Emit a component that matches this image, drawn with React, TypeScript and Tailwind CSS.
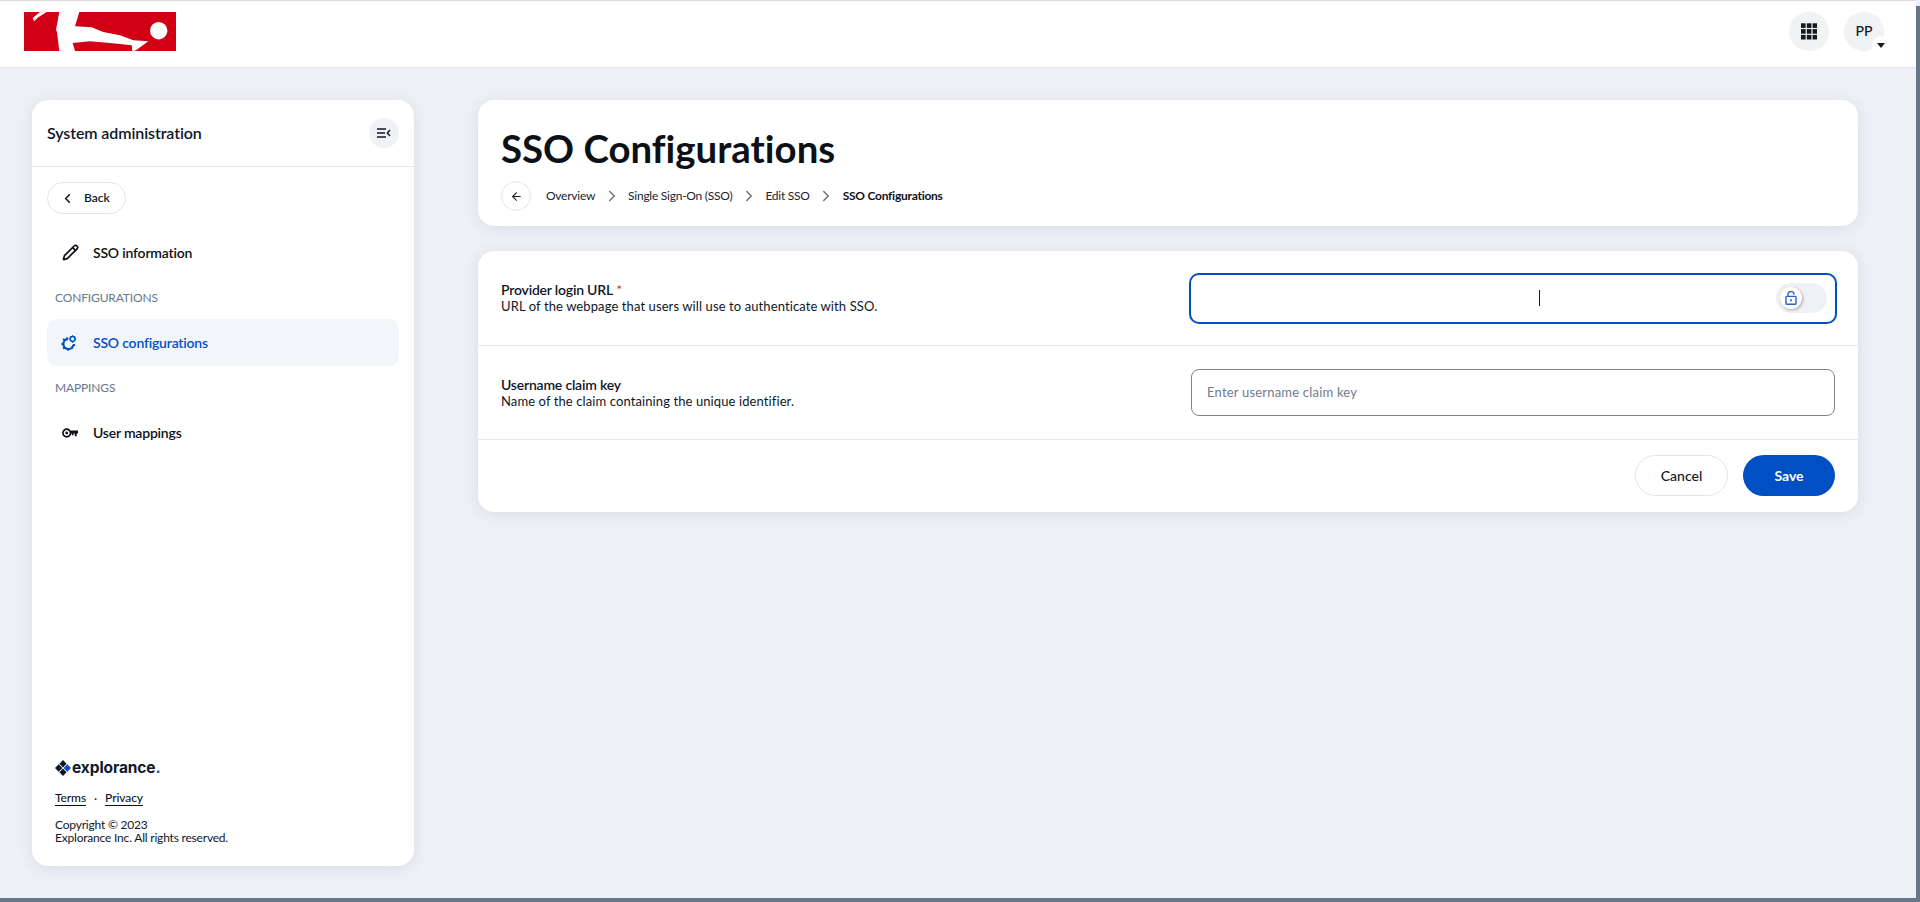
import React from "react";
import { ArrowLeft, ChevronLeft, ChevronRight, Pencil } from "lucide-react";

const font = "font-['Lato','Liberation_Sans',sans-serif] [font-variant-ligatures:none]";

function Logo() {
  return (
    <svg width="152" height="39" viewBox="0 0 152 39" className="block">
      <rect width="152" height="39" fill="#d10014" />
      <polygon
        fill="#fff"
        points="35.3,0 55.3,0 51,14.3 67.7,15.3 79.3,20 96,23.3 109.3,28.3 124.3,29.3 112.7,37.7 110,39 108.3,39 107.7,33.3 86,31 66,29.3 48.7,31 51,39 35.3,39 33,20 32,18"
      />
      <polygon fill="#fff" points="8.7,6 10,9.3 14.3,5.3 22.7,0 16,0" />
      <circle cx="134.7" cy="18.7" r="8.7" fill="#fff" />
    </svg>
  );
}

function Diamonds() {
  return (
    <svg width="16" height="16" viewBox="0 0 16 16" className="block">
      <polygon points="8,0 11.6,3.7 8,7.4 4.4,3.7" fill="#0f1729" />
      <polygon points="3.7,4.3 7.4,8 3.7,11.7 0,8" fill="#0f1729" />
      <polygon points="8,8.6 11.6,12.3 8,16 4.4,12.3" fill="#0f1729" />
      <polygon points="12.3,4.3 16,8 12.3,11.7 8.6,8" fill="#0050c4" />
    </svg>
  );
}

function GearIcon() {
  return (
    <svg width="16" height="16" viewBox="0 0 16 16" fill="none" className="block -ml-[2px]">
      <path d="M7 4.1 A5 5 0 1 0 12.3 9.8" stroke="#0050c4" strokeWidth="2.2" />
      <path
        d="M6.2 2.3v2M2.2 3.8l1.5 1.5M.4 9h2M2.2 13.8l1.5-1.5M7 15.6v-2M11.6 13.8l-1.5-1.5M14 10h-2"
        stroke="#0050c4"
        strokeWidth="2"
      />
      <circle cx="11.6" cy="4" r="2.4" stroke="#0050c4" strokeWidth="1.5" />
      <path d="M11.6.3v1M11.6 6.7v1M7.9 4h1M14.3 4h1M9 1.4l.7.7M14.2 1.4l-.7.7" stroke="#0050c4" strokeWidth="1.2" />
    </svg>
  );
}

function KeyIcon() {
  return (
    <svg width="16" height="10" viewBox="0 0 16 10" fill="none" className="block">
      <circle cx="4.7" cy="5" r="3.8" stroke="#0d1117" strokeWidth="1.7" />
      <circle cx="4.7" cy="5" r="1.4" fill="#0d1117" />
      <path d="M8.5 2.6H16v3h-1.3v2.6h-1.9V5.6h-1.2v1.6H9.8V5.6H8.5z" fill="#0d1117" />
    </svg>
  );
}

function CollapseIcon() {
  return (
    <svg width="14" height="10" viewBox="0 0 14 10" fill="none" className="block">
      <path d="M0 1h9M0 5h8M0 9h9" stroke="#0f1729" strokeWidth="1.4" />
      <path d="M13 2 10.3 5 13 8" stroke="#0f1729" strokeWidth="1.4" />
    </svg>
  );
}

function AppsIcon() {
  const cells = [0, 5.8, 11.6];
  return (
    <svg width="16" height="17" viewBox="0 0 16 17" className="block">
      {cells.map((y) =>
        cells.map((x) => <rect key={`${x}-${y}`} x={x} y={y + 0.3} width="4.6" height="4.6" fill="#14181f" />)
      )}
    </svg>
  );
}

function LockOpenIcon() {
  return (
    <svg width="12" height="14" viewBox="0 0 12 14" fill="none" className="block">
      <rect x="1" y="5.4" width="10" height="7.8" rx="0.8" stroke="#2a63c7" strokeWidth="1.4" />
      <path d="M3 5.3V3.2a3 2.6 0 0 1 6 0v.5" stroke="#2a63c7" strokeWidth="1.4" />
      <circle cx="6" cy="9.3" r="1.1" fill="#2a63c7" />
    </svg>
  );
}

function Crumb({ children, bold }: { children: React.ReactNode; bold?: boolean }) {
  return <span className={bold ? "font-bold text-[#0d1117]" : "text-[#1b2230]"}>{children}</span>;
}

function Sep() {
  return <ChevronRight size={18} strokeWidth={2} className="text-[#6b7280] mx-[7.5px] shrink-0" />;
}

function NavItem({ icon, label, active }: { icon: React.ReactNode; label: string; active?: boolean }) {
  return (
    <div
      className={`flex items-center h-[47px] rounded-[10px] ${
        active ? "bg-[#f2f5fa] text-[#0050c4]" : "text-[#0d1117]"
      }`}
    >
      <span className="w-[46px] flex justify-center shrink-0">{icon}</span>
      <span className="text-[14px] font-semibold tracking-[-0.2px]">{label}</span>
    </div>
  );
}

function SectionLabel({ children }: { children: React.ReactNode }) {
  return <div className="text-[12px] leading-[15px] text-[#68778a] tracking-[-0.15px] pl-2 h-[15px]">{children}</div>;
}

function Sidebar() {
  return (
    <aside className="w-[382px] h-[766px] bg-white rounded-2xl shadow-[0_2px_14px_rgba(40,50,90,0.10)] flex flex-col">
      <div className="h-[67px] border-b border-[#e6e8ee] flex items-center justify-between pl-[15px] pr-[15px] shrink-0">
        <span className="text-[16px] font-semibold text-[#0f1729] tracking-[-0.1px]">System administration</span>
        <span className="w-[30px] h-[30px] rounded-full bg-[#f0f1f4] flex items-center justify-center">
          <CollapseIcon />
        </span>
      </div>
      <div className="px-[15px] pt-[15px] flex-1 flex flex-col">
        <button className="w-[79px] h-8 rounded-full border border-[#e3e5ec] flex items-center pl-3 gap-[9px] text-[12px] font-semibold text-[#0f1729]">
          <ChevronLeft size={15} strokeWidth={2.6} />
          Back
        </button>
        <div className="mt-[15px]">
          <NavItem icon={<Pencil size={17} strokeWidth={2.4} />} label="SSO information" />
        </div>
        <div className="mt-[14px]">
          <SectionLabel>CONFIGURATIONS</SectionLabel>
        </div>
        <div className="mt-[14px]">
          <NavItem active icon={<GearIcon />} label="SSO configurations" />
        </div>
        <div className="mt-[14px]">
          <SectionLabel>MAPPINGS</SectionLabel>
        </div>
        <div className="mt-[14px]">
          <NavItem icon={<KeyIcon />} label="User mappings" />
        </div>
        <div className="mt-auto pl-2 pb-[22px] text-[#0f1729]">
          <div className="flex items-center gap-[1px] h-4">
            <Diamonds />
            <span className="font-['Inter',sans-serif] font-bold text-[15.5px] leading-4 tracking-[-0.1px] text-[#0f1729]">
              explorance<span className="text-[#0050c4]">.</span>
            </span>
          </div>
          <div className="flex items-center mt-[14px] text-[12px] leading-[15px] tracking-[-0.1px]">
            <span className="border-b border-[#0d1117] font-medium">Terms</span>
            <span className="mx-[8px]">·</span>
            <span className="border-b border-[#0d1117] font-medium">Privacy</span>
          </div>
          <div className="mt-[12px] text-[12px] leading-[13px] tracking-[-0.2px]">
            <div>Copyright © 2023</div>
            <div>Explorance Inc. All rights reserved.</div>
          </div>
        </div>
      </div>
    </aside>
  );
}

function FieldText({ title, desc, required }: { title: string; desc: string; required?: boolean }) {
  return (
    <div className="w-[690px] text-[13px] leading-[16px] text-[#0f1729] shrink-0 tracking-[0.1px]">
      <div className="font-semibold text-[14px] tracking-[-0.2px]">
        {title}
        {required && <span className="text-[#c0392b] font-normal"> *</span>}
      </div>
      <div>{desc}</div>
    </div>
  );
}

export default function App() {
  return (
    <div className={`${font} w-[1920px] h-[902px] overflow-hidden flex flex-col bg-[#eef0f5]`}>
      <div className="flex-1 flex min-h-0">
        <div className="flex-1 flex flex-col min-w-0">
          <header className="h-[68px] bg-white border-t border-t-[#dcdcdc] border-b border-b-[#e3e5ea] flex items-start justify-between pl-6 pr-[32px] pt-[11px] shrink-0">
            <Logo />
            <div className="flex items-center gap-[15px]">
              <span className="w-10 h-[39px] rounded-full bg-[#f1f2f4] flex items-center justify-center">
                <AppsIcon />
              </span>
              <span className="relative w-10 h-[39px] rounded-full bg-[#f1f2f4] flex items-center justify-center pb-[2px] text-[14px] font-medium text-[#0f1729]">
                PP
                <span className="absolute right-[-6px] bottom-[-3px] w-[18px] h-[18px] rounded-full bg-white flex items-center justify-center">
                  <span className="w-0 h-0 border-l-[4px] border-r-[4px] border-t-[5px] border-l-transparent border-r-transparent border-t-[#14181f]" />
                </span>
              </span>
            </div>
          </header>
          <div className="flex-1 flex pt-[32px] pl-8">
            <Sidebar />
            <main className="ml-[64px] w-[1380px] flex flex-col gap-[25px]">
              <section className="h-[126px] bg-white rounded-2xl shadow-[0_2px_14px_rgba(40,50,90,0.10)] pl-[23px] pt-[24px]">
                <h1 className="text-[38.4px] leading-[48px] font-bold text-[#0d1117]">SSO Configurations</h1>
                <div className="flex items-center mt-[9px] text-[12px] tracking-[-0.25px]">
                  <span className="w-[30px] h-[30px] rounded-full border border-[#e3e5ec] flex items-center justify-center mr-[15px] text-[#1b2230]">
                    <ArrowLeft size={13} strokeWidth={2} />
                  </span>
                  <Crumb>Overview</Crumb>
                  <Sep />
                  <Crumb>Single Sign-On (SSO)</Crumb>
                  <Sep />
                  <Crumb>Edit SSO</Crumb>
                  <Sep />
                  <Crumb bold>SSO Configurations</Crumb>
                </div>
              </section>
              <section className="bg-white rounded-2xl shadow-[0_2px_14px_rgba(40,50,90,0.10)] h-[261px] flex flex-col">
                <div className="h-[95px] border-b border-[#e6e8ee] flex items-center pl-[23px] shrink-0">
                  <FieldText
                    required
                    title="Provider login URL"
                    desc="URL of the webpage that users will use to authenticate with SSO."
                  />
                  <div className="w-[648px] h-[51px] -ml-[2px] rounded-[10px] border-2 border-[#0050c4] flex items-center justify-end pr-2 relative">
                    <span className="absolute left-[348px] top-[15px] w-px h-[16px] bg-[#14181f]" />
                    <span className="w-[51px] h-[30px] rounded-full bg-[#f0f1f4] flex items-center pl-1">
                      <span className="w-[22px] h-[22px] rounded-full bg-white shadow-[1px_1px_3px_rgba(0,0,0,0.3)] flex items-center justify-center">
                        <LockOpenIcon />
                      </span>
                    </span>
                  </div>
                </div>
                <div className="h-[94px] border-b border-[#e6e8ee] flex items-center pl-[23px] shrink-0">
                  <FieldText
                    title="Username claim key"
                    desc="Name of the claim containing the unique identifier."
                  />
                  <div className="w-[644px] h-[47px] rounded-lg border border-[#7b8494] flex items-center pl-[15px] text-[13px] tracking-[0.2px] text-[#6f7a8a]">
                    Enter username claim key
                  </div>
                </div>
                <div className="flex-1 flex items-center justify-end gap-[15px] pr-[23px] pb-[1px]">
                  <button className="w-[93px] h-[41px] rounded-full border border-[#e3e5ec] text-[14px] font-medium text-[#0f1729]">
                    Cancel
                  </button>
                  <button className="w-[92px] h-[41px] rounded-full bg-[#0050c4] text-[14px] font-bold text-white">
                    Save
                  </button>
                </div>
              </section>
            </main>
          </div>
        </div>
        <div className="w-1 mt-[6px] bg-[#677689] shrink-0" />
      </div>
      <div className="h-1 bg-[#677689] shrink-0" />
    </div>
  );
}
